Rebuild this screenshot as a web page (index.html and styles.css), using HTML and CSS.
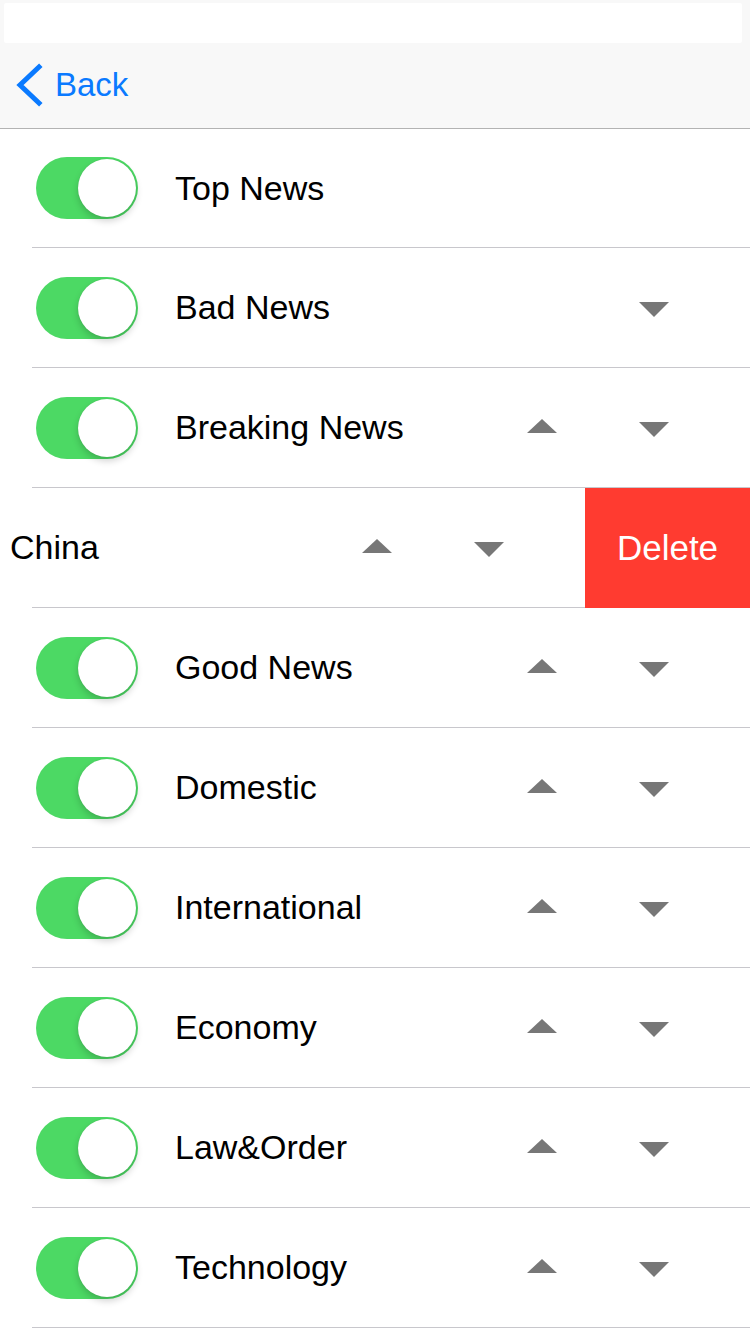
FILE: index.html
```html
<!DOCTYPE html>
<html lang="en">
<head>
<meta charset="utf-8">
<title>Channels</title>
<link rel="stylesheet" href="styles.css">
</head>
<body>
<header class="header">
  <div class="status"></div>
  <nav class="navbar">
    <a class="back" href="#">
      <svg class="chev" width="28" height="44" viewBox="0 0 28 44"><polyline points="23,4 4,22 23,40" fill="none" stroke="#0a7aff" stroke-width="5" stroke-linecap="square" stroke-linejoin="miter"/></svg>
      <span>Back</span>
    </a>
  </nav>
</header>
<main class="list">
  <div class="row first">
    <div class="row-main">
      <span class="switch"><span class="knob"></span></span>
      <span class="label">Top News</span>
      <span class="arrow hidden"><svg class="up" width="30" height="14" viewBox="0 0 30 14"><polygon points="0,14 15,0 30,14" fill="#777"/></svg></span>
      <span class="arrow hidden"><svg class="down" width="30" height="15" viewBox="0 0 30 15"><polygon points="0,0 30,0 15,15" fill="#777"/></svg></span>
    </div>
  </div>
  <div class="row">
    <div class="row-main">
      <span class="switch"><span class="knob"></span></span>
      <span class="label">Bad News</span>
      <span class="arrow hidden"><svg class="up" width="30" height="14" viewBox="0 0 30 14"><polygon points="0,14 15,0 30,14" fill="#777"/></svg></span>
      <span class="arrow"><svg class="down" width="30" height="15" viewBox="0 0 30 15"><polygon points="0,0 30,0 15,15" fill="#777"/></svg></span>
    </div>
  </div>
  <div class="row">
    <div class="row-main">
      <span class="switch"><span class="knob"></span></span>
      <span class="label">Breaking News</span>
      <span class="arrow"><svg class="up" width="30" height="14" viewBox="0 0 30 14"><polygon points="0,14 15,0 30,14" fill="#777"/></svg></span>
      <span class="arrow"><svg class="down" width="30" height="15" viewBox="0 0 30 15"><polygon points="0,0 30,0 15,15" fill="#777"/></svg></span>
    </div>
  </div>
  <div class="row swiped">
    <div class="row-main">
      <span class="switch"><span class="knob"></span></span>
      <span class="label">China</span>
      <span class="arrow"><svg class="up" width="30" height="14" viewBox="0 0 30 14"><polygon points="0,14 15,0 30,14" fill="#777"/></svg></span>
      <span class="arrow"><svg class="down" width="30" height="15" viewBox="0 0 30 15"><polygon points="0,0 30,0 15,15" fill="#777"/></svg></span>
    </div>
    <button class="delete">Delete</button>
  </div>
  <div class="row">
    <div class="row-main">
      <span class="switch"><span class="knob"></span></span>
      <span class="label">Good News</span>
      <span class="arrow"><svg class="up" width="30" height="14" viewBox="0 0 30 14"><polygon points="0,14 15,0 30,14" fill="#777"/></svg></span>
      <span class="arrow"><svg class="down" width="30" height="15" viewBox="0 0 30 15"><polygon points="0,0 30,0 15,15" fill="#777"/></svg></span>
    </div>
  </div>
  <div class="row">
    <div class="row-main">
      <span class="switch"><span class="knob"></span></span>
      <span class="label">Domestic</span>
      <span class="arrow"><svg class="up" width="30" height="14" viewBox="0 0 30 14"><polygon points="0,14 15,0 30,14" fill="#777"/></svg></span>
      <span class="arrow"><svg class="down" width="30" height="15" viewBox="0 0 30 15"><polygon points="0,0 30,0 15,15" fill="#777"/></svg></span>
    </div>
  </div>
  <div class="row">
    <div class="row-main">
      <span class="switch"><span class="knob"></span></span>
      <span class="label">International</span>
      <span class="arrow"><svg class="up" width="30" height="14" viewBox="0 0 30 14"><polygon points="0,14 15,0 30,14" fill="#777"/></svg></span>
      <span class="arrow"><svg class="down" width="30" height="15" viewBox="0 0 30 15"><polygon points="0,0 30,0 15,15" fill="#777"/></svg></span>
    </div>
  </div>
  <div class="row">
    <div class="row-main">
      <span class="switch"><span class="knob"></span></span>
      <span class="label">Economy</span>
      <span class="arrow"><svg class="up" width="30" height="14" viewBox="0 0 30 14"><polygon points="0,14 15,0 30,14" fill="#777"/></svg></span>
      <span class="arrow"><svg class="down" width="30" height="15" viewBox="0 0 30 15"><polygon points="0,0 30,0 15,15" fill="#777"/></svg></span>
    </div>
  </div>
  <div class="row">
    <div class="row-main">
      <span class="switch"><span class="knob"></span></span>
      <span class="label">Law&amp;Order</span>
      <span class="arrow"><svg class="up" width="30" height="14" viewBox="0 0 30 14"><polygon points="0,14 15,0 30,14" fill="#777"/></svg></span>
      <span class="arrow"><svg class="down" width="30" height="15" viewBox="0 0 30 15"><polygon points="0,0 30,0 15,15" fill="#777"/></svg></span>
    </div>
  </div>
  <div class="row">
    <div class="row-main">
      <span class="switch"><span class="knob"></span></span>
      <span class="label">Technology</span>
      <span class="arrow"><svg class="up" width="30" height="14" viewBox="0 0 30 14"><polygon points="0,14 15,0 30,14" fill="#777"/></svg></span>
      <span class="arrow"><svg class="down" width="30" height="15" viewBox="0 0 30 15"><polygon points="0,0 30,0 15,15" fill="#777"/></svg></span>
    </div>
  </div>
</main>
</body>
</html>
```
FILE: styles.css
```css
* { box-sizing: border-box; }
html, body {
  margin: 0;
  padding: 0;
  background: #ffffff;
  font-family: "Liberation Sans", Arial, sans-serif;
  color: #000;
}
body { width: 750px; height: 1334px; overflow: hidden; }

.header {
  background: #f8f8f8;
  padding-top: 3px;
  border-bottom: 1px solid #b3b3b3;
}
.status {
  height: 40px;
  margin: 0 8px 0 4px;
  background: #ffffff;
  border-radius: 2px;
}
.navbar {
  height: 85px;
  display: flex;
  align-items: center;
  padding-left: 16px;
}
.back {
  display: flex;
  align-items: center;
  gap: 11px;
  color: #0a7aff;
  text-decoration: none;
  font-size: 33px;
  margin-top: -1px;
}
.chev { display: block; }

.list { display: flex; flex-direction: column; }
.row {
  height: 120px;
  padding-bottom: 1px;
  display: flex;
  overflow: hidden;
  background: linear-gradient(#c8c7cc, #c8c7cc) no-repeat left 32px bottom / calc(100% - 32px) 1px;
}
.row.first { height: 119px; }
.row-main {
  flex: 1 0 auto;
  display: flex;
  align-items: center;
  padding-left: 36px;
  padding-right: 40px;
}
.switch {
  width: 102px;
  height: 62px;
  border-radius: 31px;
  background: #4cd964;
  display: flex;
  align-items: center;
  justify-content: flex-end;
  padding: 2px;
  margin-right: 37px;
  flex-shrink: 0;
}
.knob {
  width: 58px;
  height: 58px;
  border-radius: 50%;
  background: #fff;
  box-shadow: 0 4px 7px rgba(0, 0, 0, 0.18), 0 0 1px rgba(0, 0, 0, 0.15);
}
.label {
  flex: 1;
  font-size: 34px;
  white-space: nowrap;
}
.arrow {
  width: 112px;
  display: flex;
  justify-content: center;
  flex-shrink: 0;
}
.arrow.hidden { visibility: hidden; }
.up { display: block; margin-bottom: 3px; }
.down { display: block; margin-top: 4px; }

.row.swiped .row-main {
  flex: 0 0 750px;
  margin-left: -165px;
}
.delete {
  flex: 0 0 165px;
  margin: 0 0 -1px 0;
  border: 0;
  background: #ff3b30;
  color: #fff;
  font-family: "Liberation Sans", Arial, sans-serif;
  font-size: 35px;
  padding: 0;
}
```
